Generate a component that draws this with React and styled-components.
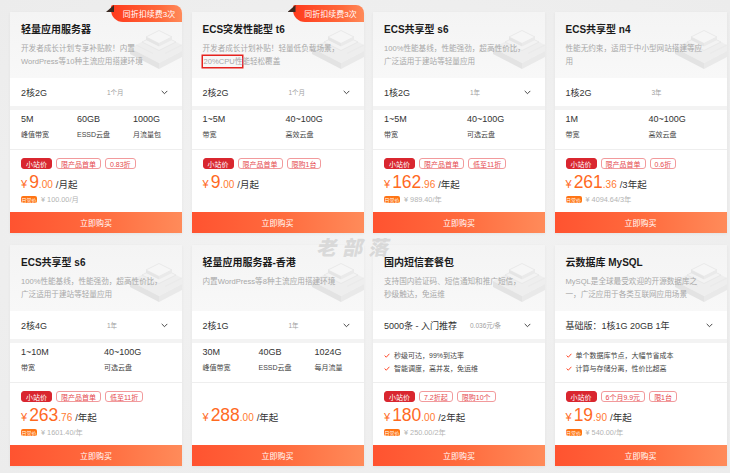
import React from "react";
import styled, { createGlobalStyle } from "styled-components";

const GlobalStyle = createGlobalStyle`
  html, body { margin: 0; padding: 0; background: #efefef; }
  body { font-family: "Liberation Sans", "Noto Sans CJK SC", sans-serif; }
  * { box-sizing: border-box; }
`;

const Page = styled.div`
  position: relative;
  width: 730px;
  height: 473px;
  padding: 12px 0 0 10px;
  background: radial-gradient(ellipse at 50% 50%, #f3f3f3 0%, #ececec 100%);
  overflow: hidden;
`;

const Grid = styled.div`
  display: grid;
  grid-template-columns: repeat(4, 172px);
  grid-auto-rows: 221px;
  column-gap: 9.5px;
  row-gap: 12px;
`;

const Card = styled.div`
  position: relative;
  display: flex;
  flex-direction: column;
  background: #fff;
  box-shadow: 0 1px 3px rgba(0, 0, 0, 0.05);
`;

const Badge = styled.div`
  position: absolute;
  top: -7px;
  right: 0;
  height: 17px;
  width: 71px;
  display: flex;
  align-items: center;
  justify-content: center;
  padding-left: 5px;
  font-size: 8px;
  color: #fff;
  white-space: nowrap;
  background: linear-gradient(90deg, #ff3a1c 0%, #ff6a3c 70%, #ff8a5a 100%);
  border-radius: 2px 8px 0 12px;
  z-index: 3;
  &::before {
    content: "";
    position: absolute;
    left: -5px;
    top: 0;
    width: 8px;
    height: 7px;
    background: #3b2a22;
    clip-path: polygon(100% 0, 100% 100%, 0 100%);
    z-index: -1;
  }
`;

const Head = styled.div`
  position: relative;
  height: 66px;
  padding: 11px 19px 0 11px;
  background: linear-gradient(180deg, #f4f4f4 0%, #f8f8f8 100%);
  overflow: hidden;
`;

const Illus = styled.svg`
  position: absolute;
  right: -8px;
  top: 5px;
`;

const Title = styled.div`
  position: relative;
  font-size: 10px;
  line-height: 14px;
  font-weight: 700;
  color: #1b1b1b;
  white-space: nowrap;
`;

const Desc = styled.div`
  position: relative;
  margin-top: 5px;
  width: 142px;
  font-size: 7.6px;
  line-height: 13px;
  color: #a8a8a8;
`;

const Boxed = styled.span`
  box-shadow: 0 0 0 1.5px #e5221e;
  padding: 1px 0 1px 1px;
`;

const Select = styled.div`
  display: flex;
  align-items: center;
  height: 32px;
  padding: 0 14px 0 11px;
  background: #fff;
  border-bottom: 4px solid #f3f3f3;
`;

const SelLabel = styled.span`
  min-width: 86px;
  font-size: 9px;
  color: #333;
  white-space: nowrap;
`;

const SelSub = styled.span`
  font-size: 6.5px;
  color: #a0a0a0;
  white-space: nowrap;
`;

const Chevron = styled.svg`
  margin-left: auto;
`;

const Specs = styled.div`
  display: grid;
  grid-template-columns: repeat(${(p) => p.$cols}, ${(p) => (p.$cols === 3 ? 56 : 83)}px);
  height: 40px;
  padding: 3px 11px 0;
  border-bottom: 1px solid #eeeeee;
`;

const SpecVal = styled.div`
  font-size: 9px;
  line-height: 12px;
  color: #333;
  white-space: nowrap;
`;

const SpecLabel = styled.div`
  margin-top: 5px;
  font-size: 7px;
  line-height: 10px;
  color: #444;
  white-space: nowrap;
`;

const Features = styled.div`
  height: 40px;
  padding: 6px 11px 0;
  border-bottom: 1px solid #eeeeee;
`;

const Feature = styled.div`
  display: flex;
  align-items: center;
  gap: 4px;
  font-size: 7px;
  line-height: 13px;
  color: #444;
  white-space: nowrap;
`;

const PriceBox = styled.div`
  flex: 1;
  padding: 8px 11px 0;
`;

const Tags = styled.div`
  display: flex;
  gap: 4px;
  height: 11px;
`;

const Tag = styled.span`
  display: inline-flex;
  align-items: center;
  height: 11px;
  padding: 0 4px;
  font-size: 7px;
  border-radius: 3px;
  white-space: nowrap;
  color: ${(p) => (p.$solid ? "#fff" : "#e5484d")};
  background: ${(p) => (p.$solid ? "#d9262f" : "#fff")};
  border: 1px solid ${(p) => (p.$solid ? "#d9262f" : "#f29a9c")};
`;

const PriceRow = styled.div`
  display: flex;
  align-items: baseline;
  margin-top: 3px;
  height: 21px;
  white-space: nowrap;
`;

const Yen = styled.span`
  font-size: 11px;
  color: #ff6a1f;
  margin-right: 2px;
`;

const Int = styled.span`
  font-size: 17.5px;
  line-height: 21px;
  color: #ff6a1f;
`;

const Dec = styled.span`
  font-size: 10px;
  color: #ff7a30;
  margin-right: 3px;
`;

const Unit = styled.span`
  font-size: 9.5px;
  color: #333;
`;

const Orig = styled.div`
  display: flex;
  align-items: center;
  gap: 4px;
  height: 10px;
  margin-top: 1px;
`;

const OrigBadge = styled.span`
  display: inline-flex;
  align-items: center;
  justify-content: center;
  width: 16px;
  height: 7px;
  font-size: 5px;
  color: #fff;
  background: #ff7414;
  border-radius: 2px;
  white-space: nowrap;
`;

const OrigText = styled.span`
  font-size: 7.3px;
  color: #b3b3b3;
  white-space: nowrap;
`;

const BuyButton = styled.div`
  display: flex;
  align-items: center;
  justify-content: center;
  height: 21px;
  font-size: 8px;
  color: #fff;
  background: linear-gradient(90deg, #ff5330 0%, #ff6a3d 50%, #ff8b5a 100%);
`;

const Watermark = styled.div`
  position: absolute;
  left: 318px;
  top: 232px;
  font-family: "Noto Sans CJK SC", sans-serif;
  font-weight: 900;
  font-size: 20px;
  letter-spacing: 6px;
  color: rgba(195, 195, 195, 0.55);
  transform: skewX(-12deg);
  pointer-events: none;
  z-index: 5;
`;

const ChipArt = () => (
  <Illus width="62" height="58" viewBox="0 0 62 58">
    <polygon points="2,31 31,16 60,31 31,46" fill="#eeeeee" />
    <polygon points="2,31 31,46 31,52 2,37" fill="#e3e3e3" />
    <polygon points="60,31 31,46 31,52 60,37" fill="#e9e9e9" />
    <polygon points="14,25 31,16.5 48,25 31,33.5" fill="#f3f3f3" stroke="#e2e2e2" strokeWidth="0.6" />
    <polygon points="18,20 31,13.5 44,20 31,26.5" fill="#f6f6f6" stroke="#e0e0e0" strokeWidth="0.6" />
    <polygon points="18,20 31,26.5 31,29.5 18,23" fill="#e5e5e5" />
    <polygon points="44,20 31,26.5 31,29.5 44,23" fill="#eaeaea" />
    <line x1="8" y1="28" x2="25" y2="36.5" stroke="#e5e5e5" strokeWidth="0.6" />
    <line x1="54" y1="28" x2="37" y2="36.5" stroke="#e5e5e5" strokeWidth="0.6" />
  </Illus>
);

const Check = () => (
  <svg width="6" height="5" viewBox="0 0 6 5">
    <polyline points="0.6,2.6 2.3,4.2 5.4,0.8" fill="none" stroke="#ff4a2a" strokeWidth="1" />
  </svg>
);

const ChevronIcon = () => (
  <Chevron width="7" height="5" viewBox="0 0 7 5">
    <polyline points="0.7,0.9 3.5,3.7 6.3,0.9" fill="none" stroke="#333" strokeWidth="0.9" />
  </Chevron>
);

const s6Desc = "100%性能基线，性能强劲，超高性价比，广泛适用于建站等轻量应用";

const products = [
  {
    badge: "同折扣续费3次",
    title: "轻量应用服务器",
    desc: "开发者成长计划专享补贴款！内置WordPress等10种主流应用搭建环境",
    sel: "2核2G",
    sub: "1个月",
    chevron: true,
    specs: [["5M", "峰值带宽"], ["60GB", "ESSD云盘"], ["1000G", "月流量包"]],
    tags: ["小站价", "限产品首单", "0.83折"],
    price: ["9", ".00", "/月起"],
    orig: "¥ 100.00/月",
  },
  {
    badge: "同折扣续费3次",
    title: "ECS突发性能型 t6",
    desc: (
      <>
        开发者成长计划补贴！轻量低负载场景，<Boxed>20%CPU性</Boxed>能轻松覆盖
      </>
    ),
    sel: "2核2G",
    sub: "1个月",
    chevron: true,
    specs: [["1~5M", "带宽"], ["40~100G", "高效云盘"]],
    tags: ["小站价", "限产品首单", "限购1台"],
    price: ["9", ".00", "/月起"],
  },
  {
    title: "ECS共享型 s6",
    desc: s6Desc,
    sel: "1核2G",
    sub: "1年",
    chevron: true,
    specs: [["1~5M", "带宽"], ["40~100G", "可选云盘"]],
    tags: ["小站价", "限产品首单", "低至11折"],
    price: ["162", ".96", "/年起"],
    orig: "¥ 989.40/年",
  },
  {
    title: "ECS共享型 n4",
    desc: "性能无约束，适用于中小型网站搭建等应用",
    sel: "1核2G",
    sub: "3年",
    chevron: false,
    specs: [["1M", "带宽"], ["40~100G", "高效云盘"]],
    tags: ["小站价", "限产品首单", "0.6折"],
    price: ["261", ".36", "/3年起"],
    orig: "¥ 4094.64/3年",
  },
  {
    title: "ECS共享型 s6",
    desc: s6Desc,
    sel: "2核4G",
    sub: "1年",
    chevron: true,
    specs: [["1~10M", "带宽"], ["40~100G", "可选云盘"]],
    tags: ["小站价", "限产品首单", "低至11折"],
    price: ["263", ".76", "/年起"],
    orig: "¥ 1601.40/年",
  },
  {
    title: "轻量应用服务器-香港",
    desc: "内置WordPress等8种主流应用搭建环境",
    sel: "2核1G",
    sub: "1年",
    chevron: true,
    specs: [["30M", "峰值带宽"], ["40GB", "ESSD云盘"], ["1024G", "每月流量"]],
    tags: [],
    price: ["288", ".00", "/年起"],
  },
  {
    title: "国内短信套餐包",
    desc: "支持国内验证码、短信通知和推广短信，秒级触达，免运维",
    sel: "5000条 - 入门推荐",
    sub: "0.036元/条",
    chevron: true,
    features: ["秒级可达，99%到达率", "智能调度，高并发，免运维"],
    tags: ["小站价", "7.2折起", "限购10个"],
    price: ["180", ".00", "/2年起"],
    orig: "¥ 250.00/2年",
  },
  {
    title: "云数据库 MySQL",
    desc: "MySQL是全球最受欢迎的开源数据库之一，广泛应用于各类互联网应用场景",
    sel: "基础版：1核1G 20GB 1年",
    chevron: true,
    features: ["单个数据库节点，大幅节省成本", "计算与存储分离，性价比超高"],
    tags: ["小站价", "6个月9.9元", "限1台"],
    price: ["19", ".90", "/年起"],
    orig: "¥ 540.00/年",
  },
];

const ProductCard = ({ p }) => (
  <Card>
    {p.badge && <Badge>{p.badge}</Badge>}
    <Head>
      <ChipArt />
      <Title>{p.title}</Title>
      <Desc>{p.desc}</Desc>
    </Head>
    <Select>
      <SelLabel>{p.sel}</SelLabel>
      {p.sub && <SelSub>{p.sub}</SelSub>}
      {p.chevron && <ChevronIcon />}
    </Select>
    {p.specs ? (
      <Specs $cols={p.specs.length}>
        {p.specs.map(([v, l]) => (
          <div key={l}>
            <SpecVal>{v}</SpecVal>
            <SpecLabel>{l}</SpecLabel>
          </div>
        ))}
      </Specs>
    ) : (
      <Features>
        {p.features.map((f) => (
          <Feature key={f}>
            <Check />
            {f}
          </Feature>
        ))}
      </Features>
    )}
    <PriceBox>
      <Tags>
        {p.tags.map((t, i) => (
          <Tag key={t} $solid={i === 0}>
            {t}
          </Tag>
        ))}
      </Tags>
      <PriceRow>
        <Yen>¥</Yen>
        <Int>{p.price[0]}</Int>
        <Dec>{p.price[1]}</Dec>
        <Unit>{p.price[2]}</Unit>
      </PriceRow>
      {p.orig && (
        <Orig>
          <OrigBadge>日常价</OrigBadge>
          <OrigText>{p.orig}</OrigText>
        </Orig>
      )}
    </PriceBox>
    <BuyButton>立即购买</BuyButton>
  </Card>
);

export default function App() {
  return (
    <Page>
      <GlobalStyle />
      <Grid>
        {products.map((p, i) => (
          <ProductCard key={i} p={p} />
        ))}
      </Grid>
      <Watermark>老部落</Watermark>
    </Page>
  );
}
